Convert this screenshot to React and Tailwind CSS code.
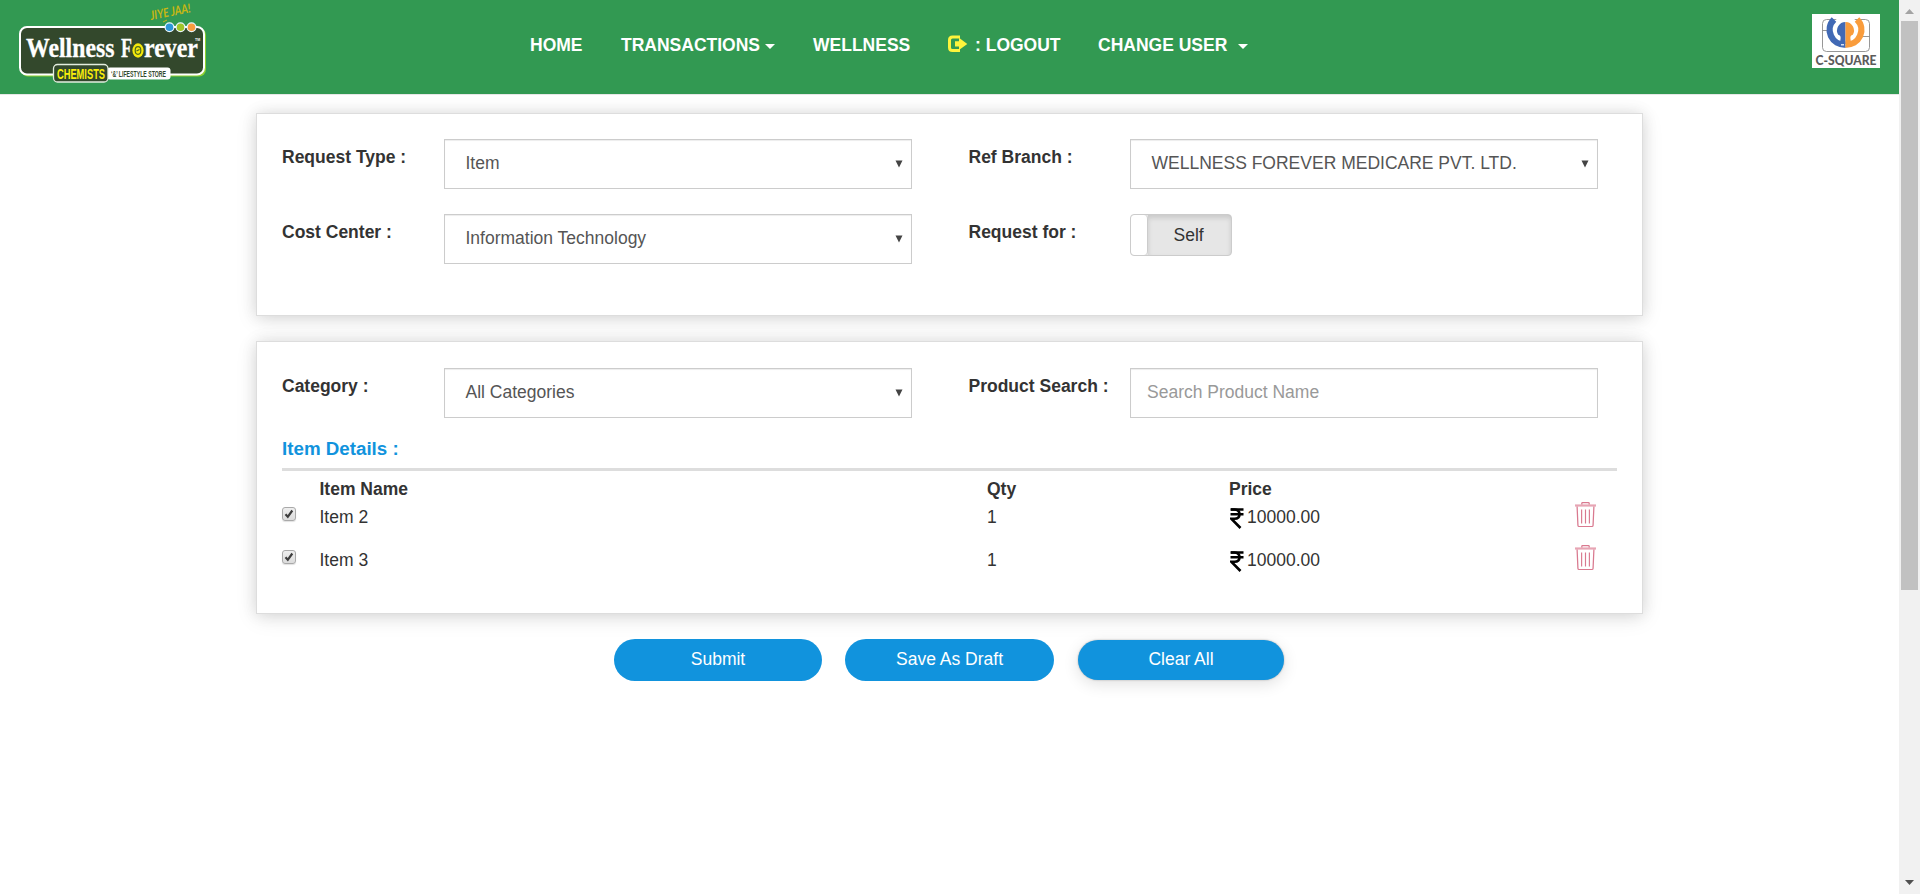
const FONT = "font-['Liberation_Sans',Arial,sans-serif]";

function WellnessLogo() {
  return (
    <svg width="240" height="94" viewBox="0 0 240 94" className="block shrink-0">
      <text x="151" y="20" fontFamily="Lato, sans-serif" fontStyle="italic" fontSize="12.500" fill="#c9b713" textLength="41" lengthAdjust="spacingAndGlyphs" transform="rotate(-11 151 20)">JIYE JAA!</text>
      <path d="M163 22 l4 -2" stroke="#c9b713" strokeWidth="1" />
      <rect x="21" y="28" width="185" height="48.5" rx="7" fill="#8ed02f" />
      <rect x="20" y="27" width="184" height="47.5" rx="7" fill="#33482c" stroke="#fff" strokeWidth="2" />
      <g fontFamily="'Liberation Serif', serif" fill="#fff" stroke="#fff" strokeWidth="0.3">
        <text x="26" y="57" fontSize="28" textLength="88.500" lengthAdjust="spacingAndGlyphs">Wellness</text>
        <text x="121" y="57" fontSize="28" textLength="11" lengthAdjust="spacingAndGlyphs">F</text>
        <text x="144" y="57" fontSize="28" textLength="54" lengthAdjust="spacingAndGlyphs">rever</text>
      </g>
      <ellipse cx="138" cy="50.500" rx="5.600" ry="7.200" fill="#f5e90c" />
      <ellipse cx="138" cy="50.500" rx="2.800" ry="3.800" fill="none" stroke="#4c6a1c" strokeWidth="1.200" />
      <path d="M136.500 51 l3 -1.500" stroke="#4c6a1c" strokeWidth="1.200" />
      <text x="195" y="41" fontFamily="'Liberation Sans', sans-serif" fontSize="3.500" fill="#fff">TM</text>
      <g stroke="#e9f5fb" strokeWidth="1.200">
        <circle cx="169.500" cy="27.300" r="4.400" fill="#2b97d8" />
        <circle cx="180.500" cy="27.300" r="4.400" fill="#a0c527" />
        <circle cx="191.500" cy="27.300" r="4.400" fill="#f99d3e" />
      </g>
      <rect x="107" y="67.500" width="63.500" height="12" rx="3" fill="#fff" />
      <rect x="53.500" y="64.500" width="54.500" height="17.500" rx="4" fill="#33482c" stroke="#e4eddf" strokeWidth="1.300" />
      <text x="57" y="79" fontFamily="'Liberation Sans', sans-serif" fontWeight="700" fontSize="15.500" fill="#fbee0a" textLength="48" lengthAdjust="spacingAndGlyphs">CHEMISTS</text>
      <text x="111" y="77" fontFamily="'Liberation Sans', sans-serif" fontWeight="700" fontSize="9" fill="#33482c" textLength="55" lengthAdjust="spacingAndGlyphs">‘&amp;’ LIFESTYLE STORE</text>
    </svg>
  );
}

function CSquareLogo() {
  return (
    <svg width="68" height="54" viewBox="0 0 68 54" className="block shrink-0">
      <rect width="68" height="54" fill="#fff" />
      <rect x="10.500" y="5.500" width="47" height="32" rx="4" fill="none" stroke="#8b8b8b" strokeWidth="0.900" />
      <path d="M10.500 16.500 H24 M44 22.500 H57.500" stroke="#8b8b8b" strokeWidth="0.900" />
      <circle cx="33.500" cy="16" r="14" fill="#fff" />
      <path d="M21 -1 L33.500 8 L46 -1z" fill="#fff" />
      <path d="M22 5.400 A14.700 14.700 0 0 0 33.500 30.500" fill="none" stroke="#4169b5" strokeWidth="6.400" />
      <path d="M45 5.400 A14.700 14.700 0 0 1 33.500 30.500" fill="none" stroke="#f99c3c" strokeWidth="6.400" />
      <path d="M33.500 8 A8.500 8.500 0 0 0 26.200 20.800 Q29 21.500 28.600 24.500 L28 28.500 L33.500 30z" fill="#4169b5" />
      <path d="M33.500 8 A8.500 8.500 0 0 1 40.800 20.800 Q38 21.500 38.400 24.500 L39 28.500 L33.500 30z" fill="#f99c3c" />
      <path d="M29 30.800 h3" stroke="#fff" strokeWidth="1.200" />
      <text x="3.500" y="50.800" fontFamily="Lato, sans-serif" fontWeight="900" fontSize="13.500" fill="#5c5b5b" textLength="61" lengthAdjust="spacingAndGlyphs">C-SQUARE</text>
    </svg>
  );
}

function Caret({ className }) {
  return (
    <svg width="10" height="5" viewBox="0 0 10 5" className={className}>
      <path d="M0 0 H10 L5 5z" fill="#fff" />
    </svg>
  );
}

function LogoutIcon() {
  return (
    <svg width="21" height="18" viewBox="0 0 21 18" className="-mt-0.5 mr-[7px]">
      <path d="M13 2 H5.500 Q2.500 2 2.500 5 V12.500 Q2.500 15.500 5.500 15.500 H13" fill="none" stroke="#fdf43c" strokeWidth="3" />
      <path d="M8 6.300 H12 V2.800 L20.300 8.900 L12 15 V11.500 H8z" fill="#fdf43c" />
    </svg>
  );
}

function Rupee() {
  return (
    <svg width="14" height="21" viewBox="0 0 14 21" className="mr-[3px] ml-px mt-[3px] shrink-0">
      <path d="M0.500 1.500 H13.500 M0.500 6.300 H13.500" stroke="#000" strokeWidth="2.400" />
      <path d="M1 1.500 H4.500 Q9.500 1.800 9.500 6 Q9.500 10.800 4.500 10.800 H1.500 L10.500 20" fill="none" stroke="#000" strokeWidth="2.600" />
    </svg>
  );
}

function Trash() {
  return (
    <svg width="21" height="26" viewBox="0 0 20 26" preserveAspectRatio="none" fill="none" stroke="#d9798f" className="-mt-[3px]">
      <path d="M0 3.500 H20" strokeWidth="2.200" stroke="#e7a5b4" />
      <path d="M6.500 2.500 V1.200 Q6.500 .6 7.200 .6 H12.800 Q13.500 .6 13.500 1.200 V2.500" strokeWidth="1.200" />
      <path d="M2 4.500 L2.800 23.500 Q2.900 24.500 3.800 24.500 H16.200 Q17.100 24.500 17.200 23.500 L18 4.500" strokeWidth="1.200" />
      <path d="M6.300 7.500 V21.500 M10 7.500 V21.500 M13.700 7.500 V21.500" strokeWidth="1.100" />
    </svg>
  );
}

function CheckBox() {
  return (
    <span className="mt-0.5 flex size-[14px] items-center justify-center rounded-[3px] border border-[#a9a9a9] bg-linear-to-b from-[#eeeeee] to-[#dcdcdc] shadow-[0_1px_1px_rgba(0,0,0,0.12)]">
      <svg width="12" height="12" viewBox="0 0 12 12">
        <path d="M2.500 6.300 L4.800 8.800 L9.300 2.500" fill="none" stroke="#3d3d3d" strokeWidth="2.200" />
      </svg>
    </span>
  );
}

function Label({ children }) {
  return <div className="pt-1.5 font-bold whitespace-nowrap">{children}</div>;
}

function Select({ children }) {
  return (
    <div className="flex h-[50px] justify-between border border-[#ccc] pt-[11px] pr-2 pl-[20.5px] text-[#555] shadow-[inset_0_1px_1px_rgba(0,0,0,0.075)]">
      <span>{children}</span>
      <svg width="8" height="8" viewBox="0 0 8 8" className="mt-[9px]">
        <path d="M0.500 0.500 H7.500 L4 7.500z" fill="#444" />
      </svg>
    </div>
  );
}

const FORM_GRID = "grid grid-cols-[162px_468px_56.5px_161.5px_468px] gap-y-[25px]";
const CARD = "ml-64 w-[1387px] border border-[#ddd] bg-white pl-[25px] shadow-[0_4px_20px_rgba(0,0,0,0.1),0_0_14px_rgba(0,0,0,0.1)]";
const BUTTON = "rounded-full bg-[#1193dd] text-center text-white";

export default function App() {
  return (
    <div className={`flex h-[894px] overflow-hidden bg-white text-[17.5px] leading-6 text-[#333] ${FONT}`}>
      <div className="w-[1899px]">
        <header className="flex h-[95px] border-b border-[#e7e7e7] bg-[#329952] font-bold whitespace-nowrap text-white">
          <WellnessLogo />
          <nav className="flex h-[94px] w-[1572px] pt-[33px] pl-[290px]">
            <span className="w-[91px]">HOME</span>
            <span className="flex w-[192px]">TRANSACTIONS<Caret className="mt-[11px] ml-[5px]" /></span>
            <span className="w-[134px]">WELLNESS</span>
            <span className="flex w-[151px] items-center self-start">
              <LogoutIcon />: LOGOUT
            </span>
            <span className="flex">CHANGE USER<Caret className="mt-[11px] ml-[11px]" /></span>
          </nav>
          <div className="pt-3.5">
            <CSquareLogo />
          </div>
        </header>

        <section className={`${CARD} mt-[18px] h-[203px] pt-[25px]`}>
          <div className={FORM_GRID}>
            <Label>Request Type :</Label>
            <Select>Item</Select>
            <span />
            <Label>Ref Branch :</Label>
            <Select>WELLNESS FOREVER MEDICARE PVT. LTD.</Select>
            <Label>Cost Center :</Label>
            <Select>Information Technology</Select>
            <span />
            <Label>Request for :</Label>
            <div className="flex h-[42px] w-[102px] overflow-hidden rounded border border-[#ccc] bg-[#e6e6e6]">
              <div className="w-[17px] rounded border-r border-[#ccc] bg-white" />
              <div className="flex-1 pt-2 pl-[25.5px] shadow-[inset_0_3px_5px_rgba(0,0,0,0.125)]">Self</div>
            </div>
          </div>
        </section>

        <section className={`${CARD} mt-[25px] h-[273px] pt-[26px]`}>
          <div className={FORM_GRID}>
            <Label>Category :</Label>
            <Select>All Categories</Select>
            <span />
            <Label>Product Search :</Label>
            <div className="h-[50px] border border-[#ccc] pt-[11px] pl-4 text-[#999] shadow-[inset_0_1px_1px_rgba(0,0,0,0.075)]">Search Product Name</div>
          </div>
          <h2 className="mt-[19px] h-[31px] text-[18.75px] font-bold text-[#1193dd]">Item Details :</h2>
          <div className="h-[3px] w-[1335px] bg-[#ddd]" />
          <div className="mt-1.5 grid h-7 grid-cols-[37.5px_667.5px_242px_auto] font-bold">
            <span />
            <span>Item Name</span>
            <span>Qty</span>
            <span>Price</span>
          </div>
          {["Item 2", "Item 3"].map((name) => (
            <div key={name} className="grid h-[43px] grid-cols-[37.5px_667.5px_242px_346px_auto]">
              <CheckBox />
              <span>{name}</span>
              <span>1</span>
              <span className="flex items-start"><Rupee />10000.00</span>
              <Trash />
            </div>
          ))}
        </section>

        <div className="mt-[25px] flex items-center pl-[614px]">
          <button className={`${BUTTON} h-[42px] w-[208px] pb-0.5`}>Submit</button>
          <button className={`${BUTTON} ml-[23px] h-[42px] w-[209px] pb-0.5`}>Save As Draft</button>
          <button className={`${BUTTON} ml-6 h-10 w-[206px] pb-0.5 shadow-[0_4px_16px_rgba(0,0,0,0.12),0_0_2px_rgba(0,0,0,0.3)]`}>Clear All</button>
        </div>
      </div>

      <div className="flex w-[21px] flex-col items-center bg-[#f1f1f1]">
        <svg width="9" height="5" viewBox="0 0 9 5" className="mt-[9px]">
          <path d="M0 5 H9 L4.500 0z" fill="#a3a3a3" />
        </svg>
        <div className="mt-[7px] h-[569px] w-[17px] bg-[#c1c1c1]" />
        <svg width="9" height="5" viewBox="0 0 9 5" className="mt-auto mb-[9px]">
          <path d="M0 0 H9 L4.500 5z" fill="#505050" />
        </svg>
      </div>
    </div>
  );
}
